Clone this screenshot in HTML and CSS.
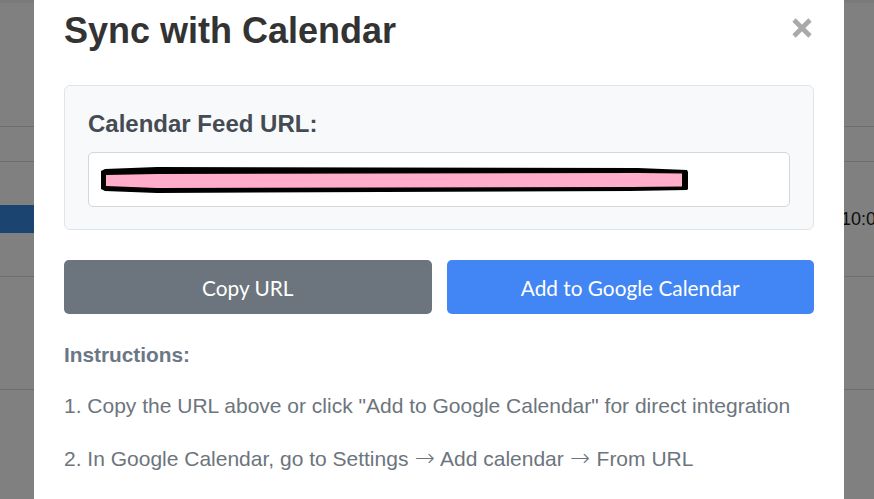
FILE: index.html
```html
<!DOCTYPE html>
<html lang="en">
<head>
<meta charset="utf-8">
<title>Sync with Calendar</title>
<link rel="stylesheet" href="styles.css">
</head>
<body>
<div class="page">
  <div class="strip"></div>
  <div class="row row-1"></div>
  <div class="row row-2"></div>
  <div class="row row-3 no-line"></div>
  <div class="row row-4 no-line">
    <div class="sel-cell"></div>
    <div class="time-cell">10:00</div>
  </div>
  <div class="row row-5"></div>
  <div class="row row-6"></div>
</div>

<div class="modal">
  <div class="modal-header">
    <h2 class="modal-title">Sync with Calendar</h2>
    <svg class="close" width="22" height="20" viewBox="0 0 22 20" aria-label="Close">
      <path d="M3 2 L19 18 M19 2 L3 18" stroke="#a9a9a9" stroke-width="4.6" fill="none"/>
    </svg>
  </div>

  <div class="feed-card">
    <div class="feed-label">Calendar Feed URL:</div>
    <div class="feed-field">
      <svg class="redact" width="701" height="53" viewBox="0 0 701 53">
        <polygon points="12,18 16,16 68,14 549,15 598,17 599,19 599,36 598,37 541,38 68,40 16,38 12,36" fill="#000"/>
        <polygon points="17,22 68,21 549,20 593,20.5 593,33.5 541,34 68,35 17,33" fill="#ffadca"/>
      </svg>
    </div>
  </div>

  <div class="actions">
    <button class="btn btn-gray">Copy URL</button>
    <button class="btn btn-blue">Add to Google Calendar</button>
  </div>

  <div class="instructions">
    <div class="inst-title">Instructions:</div>
    <p class="inst-step step-1">1. Copy the URL above or click "Add to Google Calendar" for direct integration</p>
    <p class="inst-step step-2">2. In Google Calendar, go to Settings <span class="arrow">→</span> Add calendar <span class="arrow">→</span> From URL</p>
  </div>
</div>
</body>
</html>
```

FILE: styles.css
```css
* { box-sizing: border-box; }

html, body {
  margin: 0;
  padding: 0;
  height: 100%;
  overflow: hidden;
}

body {
  background: #808080;
  font-family: "Liberation Sans", Arial, sans-serif;
}

.page {
  display: flex;
  flex-direction: column;
}

.strip {
  height: 3px;
  background: #7a7a7a;
}

.row {
  border-bottom: 1px solid #6d6d6d;
  display: flex;
}

.row.no-line { border-bottom: none; }

.row-1 { height: 124px; }
.row-2 { height: 35px; }
.row-3 { height: 43px; }
.row-4 { height: 28px; }
.row-5 { height: 44px; }
.row-6 { height: 113px; }

.sel-cell {
  flex-shrink: 0;
  width: 120px;
  background: #1b4570;
}

.time-cell {
  flex-shrink: 0;
  margin-left: 721px;
  color: #0d0d0d;
  font-size: 18px;
  line-height: 28px;
  white-space: nowrap;
}

.modal {
  position: absolute;
  left: 34px;
  top: -20px;
  width: 810px;
  height: 560px;
  background: #fff;
  padding: 30px;
}

.modal-header {
  display: flex;
  justify-content: space-between;
  align-items: flex-start;
  margin-bottom: 34px;
}

.modal-title {
  margin: 0;
  font-size: 36px;
  font-weight: bold;
  color: #333;
  line-height: 41px;
}

.close {
  display: block;
  margin-top: 8px;
  margin-right: 1px;
}

.feed-card {
  background: #f8f9fa;
  border: 1px solid #e1e4e8;
  border-radius: 6px;
  padding: 24px 23px 22px 23px;
}

.feed-label {
  font-size: 24px;
  font-weight: bold;
  color: #454b52;
  line-height: 28px;
  margin-bottom: 14px;
}

.feed-field {
  height: 55px;
  background: #fff;
  border: 1px solid #d3d7dc;
  border-radius: 5px;
}

.redact { display: block; }

.actions {
  display: flex;
  gap: 15px;
  margin-top: 30px;
}

.btn {
  flex: 1;
  height: 54px;
  border: none;
  border-radius: 5px;
  color: #fff;
  font-family: Lato, "Open Sans", sans-serif;
  font-size: 20.8px;
  padding: 0;
}

.btn-gray { background: #6c757d; }
.btn-blue { background: #4285f4; }

.instructions {
  margin-top: 29px;
  color: #6c757d;
}

.inst-title {
  font-size: 20.8px;
  font-weight: bold;
  color: #6b7784;
  line-height: 24px;
}

.inst-step {
  margin: 0;
  font-size: 21px;
  line-height: 24px;
}

.arrow {
  font-family: "DejaVu Sans", sans-serif;
  font-weight: 200;
  font-size: 24px;
  line-height: 0;
  margin: 0 0.5px;
}

.step-1 { margin-top: 27px; }
.step-2 { margin-top: 29px; }
```
